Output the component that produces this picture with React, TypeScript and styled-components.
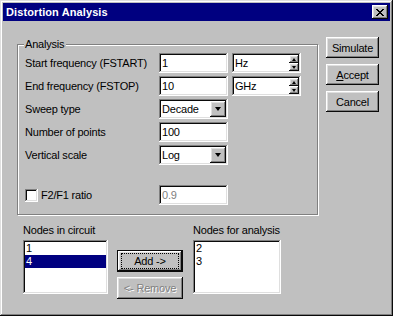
import React from 'react';
import styled, { createGlobalStyle, css } from 'styled-components';

const GlobalStyle = createGlobalStyle`
  html, body {
    margin: 0;
    padding: 0;
    background: #c0c0c0;
  }
`;

const raised = css`
  box-shadow: inset -1px -1px #0a0a0a, inset 1px 1px #fff, inset -2px -2px #808080,
    inset 2px 2px #dfdfdf;
`;

const sunken = css`
  box-shadow: inset -1px -1px #fff, inset 1px 1px #808080, inset -2px -2px #dfdfdf,
    inset 2px 2px #0a0a0a;
`;

const Window = styled.div`
  width: 393px;
  height: 316px;
  box-sizing: border-box;
  padding: 3px;
  background: #c0c0c0;
  box-shadow: inset -1px -1px #0a0a0a, inset 1px 1px #dfdfdf, inset -2px -2px #808080,
    inset 2px 2px #fff;
  font-family: 'Liberation Sans', Arial, sans-serif;
  font-size: 11px;
  letter-spacing: -0.2px;
  color: #000;
  display: flex;
  flex-direction: column;
`;

const TitleBar = styled.div`
  height: 18px;
  flex: none;
  background: #000080;
  color: #fff;
  display: flex;
  align-items: center;
  justify-content: space-between;
  padding: 0 2px 0 3px;
`;

const Title = styled.span`
  font-weight: bold;
  letter-spacing: 0.1px;
`;

const CloseButton = styled.div`
  width: 16px;
  height: 14px;
  background: #c0c0c0;
  ${raised};
  display: flex;
  align-items: center;
  justify-content: center;
`;

const Body = styled.div`
  display: grid;
  grid-template-columns: 302px 53px;
  column-gap: 7px;
  align-items: start;
  padding: 16px 0 0 14px;
`;

const LeftColumn = styled.div`
  display: flex;
  flex-direction: column;
  padding-top: 7px;
`;

const GroupBox = styled.div`
  position: relative;
  box-sizing: border-box;
  width: 301px;
  height: 171px;
  border: 1px solid #808080;
  box-shadow: inset 1px 1px #fff, 1px 1px #fff;
  padding: 8px 0 0 7px;
`;

const GroupLabel = styled.span`
  position: absolute;
  top: -7px;
  left: 6px;
  padding: 0 2px 0 1px;
  line-height: 13px;
  background: #c0c0c0;
`;

const FormGrid = styled.div`
  display: grid;
  grid-template-columns: 130px 69px 69px;
  grid-auto-rows: 20px;
  column-gap: 4px;
  row-gap: 3px;
  align-items: center;
`;

const CheckRow = styled(FormGrid)`
  margin-top: 20px;
`;

const Label = styled.span`
  white-space: nowrap;
`;

const Field = styled.div<{ $disabled?: boolean }>`
  height: 20px;
  box-sizing: border-box;
  background: #fff;
  ${sunken};
  padding: 2px 2px 2px 3px;
  display: flex;
  align-items: center;
  color: ${(p) => (p.$disabled ? '#808080' : '#000')};
`;

const FieldText = styled.span`
  flex: 1;
  line-height: 16px;
`;

const DropButton = styled.div`
  width: 16px;
  height: 16px;
  flex: none;
  background: #c0c0c0;
  ${raised};
  display: flex;
  align-items: center;
  justify-content: center;
`;

const Arrow = styled.span<{ $up?: boolean; $size: number }>`
  width: 0;
  height: 0;
  border-left: ${(p) => p.$size}px solid transparent;
  border-right: ${(p) => p.$size}px solid transparent;
  ${(p) =>
    p.$up
      ? `border-bottom: ${Math.ceil(p.$size / 1.5) + 1}px solid #000;`
      : `border-top: ${Math.ceil(p.$size / 1.5) + 1}px solid #000;`}
`;

const Spin = styled.div`
  width: 10px;
  height: 16px;
  flex: none;
  display: flex;
  flex-direction: column;
`;

const SpinButton = styled.div`
  flex: 1;
  background: #c0c0c0;
  ${raised};
  display: flex;
  align-items: center;
  justify-content: center;
`;

const CheckLabel = styled.label`
  display: flex;
  align-items: center;
  gap: 3px;
  white-space: nowrap;
`;

const CheckBox = styled.span`
  width: 13px;
  height: 13px;
  box-sizing: border-box;
  background: #fff;
  ${sunken};
`;

const Bottom = styled.div`
  display: flex;
  margin: 9px 0 0 6px;
`;

const ListColumn = styled.div<{ $width: number }>`
  width: ${(p) => p.$width}px;
  display: flex;
  flex-direction: column;
  gap: 3px;
`;

const ListCaption = styled.span`
  line-height: 13px;
  white-space: nowrap;
`;

const ListBox = styled.div`
  height: 54px;
  box-sizing: border-box;
  background: #fff;
  ${sunken};
  padding: 2px;
`;

const ListItem = styled.div<{ $selected?: boolean }>`
  height: 13px;
  line-height: 13px;
  padding-left: 1px;
  background: ${(p) => (p.$selected ? '#000080' : 'transparent')};
  color: ${(p) => (p.$selected ? '#fff' : '#000')};
`;

const MoveButtons = styled.div`
  width: 66px;
  margin: 26px 10px 0 9px;
  display: flex;
  flex-direction: column;
  gap: 5px;
`;

const Button = styled.div<{ $default?: boolean; $disabled?: boolean; $height?: number }>`
  height: ${(p) => p.$height ?? 21}px;
  box-sizing: border-box;
  background: #c0c0c0;
  display: flex;
  align-items: center;
  justify-content: center;
  ${(p) =>
    p.$default
      ? `box-shadow: inset 0 0 0 1px #0a0a0a, inset -2px -2px #0a0a0a, inset 2px 2px #fff, inset -3px -3px #808080, inset 3px 3px #dfdfdf;`
      : `box-shadow: inset -1px -1px #0a0a0a, inset 1px 1px #fff, inset -2px -2px #808080, inset 2px 2px #dfdfdf;`}
  color: ${(p) => (p.$disabled ? '#808080' : '#000')};
  text-shadow: ${(p) => (p.$disabled ? '1px 1px #fff' : 'none')};
`;

const FocusRect = styled.span`
  flex: 1;
  align-self: stretch;
  margin: 3px 4px 3px 4px;
  border: 1px dotted #000;
  display: flex;
  align-items: center;
  justify-content: center;
`;

const ActionColumn = styled.div`
  display: flex;
  flex-direction: column;
  gap: 6px;
`;

const Accel = styled.span`
  text-decoration: underline;
`;

const CloseGlyph = () => (
  <svg width="8" height="7" viewBox="0 0 8 7" shapeRendering="crispEdges">
    <path
      d="M0 0h2v1h-2zM6 0h2v1h-2zM1 1h2v1h-2zM5 1h2v1h-2zM2 2h4v1h-4zM3 3h2v1h-2zM2 4h4v1h-4zM1 5h2v1h-2zM5 5h2v1h-2zM0 6h2v1h-2zM6 6h2v1h-2z"
      fill="#000"
    />
  </svg>
);

const Dropdown: React.FC<{ value: string }> = ({ value }) => (
  <Field>
    <FieldText>{value}</FieldText>
    <DropButton>
      <Arrow $size={3.5} />
    </DropButton>
  </Field>
);

const UnitField: React.FC<{ value: string }> = ({ value }) => (
  <Field>
    <FieldText>{value}</FieldText>
    <Spin>
      <SpinButton>
        <Arrow $up $size={2} />
      </SpinButton>
      <SpinButton>
        <Arrow $size={2} />
      </SpinButton>
    </Spin>
  </Field>
);

export default function App() {
  return (
    <Window>
      <GlobalStyle />
      <TitleBar>
        <Title>Distortion Analysis</Title>
        <CloseButton>
          <CloseGlyph />
        </CloseButton>
      </TitleBar>
      <Body>
        <LeftColumn>
          <GroupBox>
            <GroupLabel>Analysis</GroupLabel>
            <FormGrid>
              <Label>Start frequency (FSTART)</Label>
              <Field>
                <FieldText>1</FieldText>
              </Field>
              <UnitField value="Hz" />

              <Label>End frequency (FSTOP)</Label>
              <Field>
                <FieldText>10</FieldText>
              </Field>
              <UnitField value="GHz" />

              <Label>Sweep type</Label>
              <Dropdown value="Decade" />
              <span />

              <Label>Number of points</Label>
              <Field>
                <FieldText>100</FieldText>
              </Field>
              <span />

              <Label>Vertical scale</Label>
              <Dropdown value="Log" />
              <span />
            </FormGrid>
            <CheckRow>
              <CheckLabel>
                <CheckBox />
                F2/F1 ratio
              </CheckLabel>
              <Field $disabled>
                <FieldText>0.9</FieldText>
              </Field>
            </CheckRow>
          </GroupBox>

          <Bottom>
            <ListColumn $width={85}>
              <ListCaption>Nodes in circuit</ListCaption>
              <ListBox>
                <ListItem>1</ListItem>
                <ListItem $selected>4</ListItem>
              </ListBox>
            </ListColumn>
            <MoveButtons>
              <Button $default $height={22}>
                <FocusRect>Add -&gt;</FocusRect>
              </Button>
              <Button $disabled $height={22}>
                &lt;- Remove
              </Button>
            </MoveButtons>
            <ListColumn $width={88}>
              <ListCaption>Nodes for analysis</ListCaption>
              <ListBox>
                <ListItem>2</ListItem>
                <ListItem>3</ListItem>
              </ListBox>
            </ListColumn>
          </Bottom>
        </LeftColumn>

        <ActionColumn>
          <Button>Simulate</Button>
          <Button>
            <span>
              <Accel>A</Accel>ccept
            </span>
          </Button>
          <Button>Cancel</Button>
        </ActionColumn>
      </Body>
    </Window>
  );
}
